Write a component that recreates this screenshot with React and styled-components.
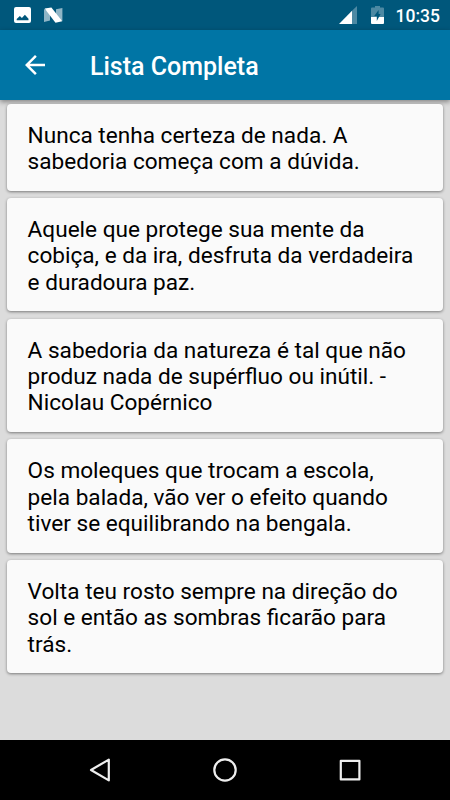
import styled, { createGlobalStyle } from "styled-components";

const GlobalStyle = createGlobalStyle`
    * {
        box-sizing: border-box;
    }
    body {
        margin: 0;
        font-family: Roboto, sans-serif;
        background: #dcdcdc;
    }
`;

const Screen = styled.div`
    display: flex;
    flex-direction: column;
    width: 450px;
    height: 800px;
    overflow: hidden;
    background: #dcdcdc;
`;

const StatusBar = styled.div`
    display: flex;
    flex-direction: row;
    justify-content: space-between;
    flex: none;
    height: 30px;
    padding: 0 10px 0 14px;
    background: #00577b;
    color: white;
`;

const StatusGroup = styled.div`
    display: flex;
    flex-direction: row;
    align-items: center;
    gap: ${(props) => props.$gap};
    & svg {
        display: block;
    }
`;

const Clock = styled.span`
    margin-left: -2px;
    font-size: 17.5px;
    font-weight: 500;
    line-height: 30px;
    padding-top: 2px;
`;

const Toolbar = styled.header`
    display: flex;
    flex-direction: row;
    align-items: center;
    flex: none;
    height: 70px;
    padding-left: 20px;
    background: #0075a5;
    color: white;
    box-shadow: 0 2px 5px rgba(0, 0, 0, 0.4);
`;

const BackButton = styled.button`
    display: flex;
    width: 30px;
    height: 30px;
    padding: 0;
    border: 0;
    background: none;
    color: white;
`;

const Title = styled.h1`
    margin: 4px 0 0 40px;
    font-size: 25px;
    font-weight: 500;
    line-height: 30px;
`;

const List = styled.main`
    display: flex;
    flex-direction: column;
    flex: 1;
    gap: 7.5px;
    padding: 4px 7.5px 0 7px;
`;

const Card = styled.article`
    padding: 18.7px 20px 15.3px 20.6px;
    border-radius: 4px;
    background: #fafafa;
    box-shadow: 0 1px 3px rgba(0, 0, 0, 0.45);
    & p {
        margin: 0;
        font-size: 22.6px;
        font-weight: 370;
        line-height: 26.37px;
        color: #000;
        white-space: pre-line;
    }
`;

const NavBar = styled.nav`
    display: flex;
    flex-direction: row;
    justify-content: center;
    align-items: center;
    flex: none;
    gap: 95px;
    height: 60px;
    background: black;
    & svg {
        display: block;
        fill: none;
        stroke: #eee;
        stroke-width: 2.2;
        stroke-linejoin: round;
    }
`;

const quotes = [
    "Nunca tenha certeza de nada. A\nsabedoria começa com a dúvida.",
    "Aquele que protege sua mente da\ncobiça, e da ira, desfruta da verdadeira\ne duradoura paz.",
    "A sabedoria da natureza é tal que não\nproduz nada de supérfluo ou inútil. -\nNicolau Copérnico",
    "Os moleques que trocam a escola,\npela balada, vão ver o efeito quando\ntiver se equilibrando na bengala.",
    "Volta teu rosto sempre na direção do\nsol e então as sombras ficarão para\ntrás.",
];

const PictureIcon = () => (
    <svg width="17" height="30" viewBox="0 0 17 30">
        <path
            fill="#fff"
            fillRule="evenodd"
            d="M2 7h13a2 2 0 0 1 2 2v12a2 2 0 0 1-2 2H2a2 2 0 0 1-2-2V9a2 2 0 0 1 2-2zM2.7 20.3h11.8v-1.6l-3.6-4-3 3.4-2-2.2-3.2 3.2z"
        />
    </svg>
);

const NougatIcon = () => (
    <svg width="19" height="30" viewBox="0 0 19 30">
        <path fill="#8fb5c6" d="M0 9L6 12v8.5L0 22zM18.4 8v13L12 18V9.3z" />
        <path fill="#fff" d="M0.6 8.4l6.8-.9L18.3 21.2l-6.8 1.6z" />
    </svg>
);

const SignalIcon = () => (
    <svg width="18" height="30" viewBox="0 0 18 30">
        <path fill="#4d89a3" d="M13 10.8L18 6v18h-5z" />
        <path fill="#fff" d="M0 24L13 10.8V24z" />
    </svg>
);

const BatteryIcon = () => (
    <svg width="13" height="30" viewBox="0 0 13 30">
        <path fill="#4d89a3" d="M1 7.5h3V6h5v1.5h3a1 1 0 0 1 1 1V17H0V8.5a1 1 0 0 1 1-1z" />
        <path fill="#fff" d="M0 17h13v6a1 1 0 0 1-1 1H1a1 1 0 0 1-1-1z" />
        <path fill="#00577b" d="M7.6 10L3.2 16h2.6v5L9.6 14H7.6z" />
    </svg>
);

const ArrowIcon = () => (
    <svg width="30" height="30" viewBox="0 0 24 24">
        <path fill="currentColor" d="M20 11H7.83l5.59-5.59L12 4l-8 8 8 8 1.41-1.41L7.83 13H20v-2z" />
    </svg>
);

const App = () => {
    return (
        <>
            <GlobalStyle />
            <Screen>
                <StatusBar>
                    <StatusGroup $gap="13px">
                        <PictureIcon />
                        <NougatIcon />
                    </StatusGroup>
                    <StatusGroup $gap="14px">
                        <SignalIcon />
                        <BatteryIcon />
                        <Clock>10:35</Clock>
                    </StatusGroup>
                </StatusBar>
                <Toolbar>
                    <BackButton aria-label="Voltar">
                        <ArrowIcon />
                    </BackButton>
                    <Title>Lista Completa</Title>
                </Toolbar>
                <List>
                    {quotes.map((quote) => (
                        <Card key={quote}>
                            <p>{quote}</p>
                        </Card>
                    ))}
                </List>
                <NavBar>
                    <svg width="30" height="30" viewBox="0 0 30 30">
                        <path d="M23.8 4.6v20.8L6 15z" />
                    </svg>
                    <svg width="30" height="30" viewBox="0 0 30 30">
                        <circle cx="15" cy="15" r="10.7" />
                    </svg>
                    <svg width="30" height="30" viewBox="0 0 30 30">
                        <rect x="5.8" y="5.8" width="18.6" height="18.6" />
                    </svg>
                </NavBar>
            </Screen>
        </>
    );
};

export default App;
